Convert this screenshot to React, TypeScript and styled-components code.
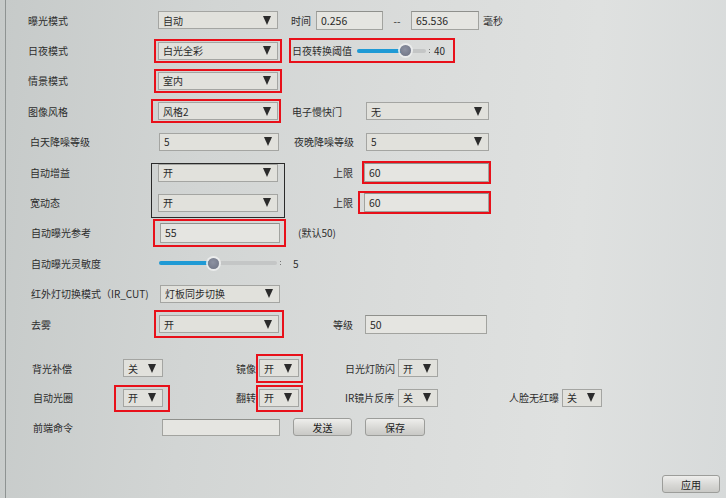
import styled, { createGlobalStyle } from 'styled-components';
import type { ReactNode } from 'react';

const GlobalStyle = createGlobalStyle`
  html, body { margin: 0; padding: 0; }
  body {
    width: 726px;
    height: 498px;
    overflow: hidden;
    font-family: "Noto Sans CJK SC", "Noto Sans", sans-serif;
    font-size: 10px;
    color: #2b2b2b;
  }
`;

const Screen = styled.div`
  width: 726px;
  height: 498px;
  box-sizing: border-box;
  padding-left: 5px;
  background: linear-gradient(95deg, #c6cac9 0%, #d2d5d4 28%, #dadcdb 55%, #dfe1e0 78%, #d7dada 100%);
`;

const Panel = styled.div`
  height: 100%;
  box-sizing: border-box;
  border-left: 1px solid #8e9392;
  padding: 5px 6px 5px 22px;
  display: flex;
  flex-direction: column;
`;

const MainGrid = styled.div`
  display: grid;
  grid-template-columns: 130px 122px 84px 126px 1fr;
  grid-auto-rows: 30.4px;
  align-items: center;
`;

const BottomGrid = styled.div`
  margin-top: 14px;
  display: grid;
  grid-template-columns: 95px 77px 59px 86px 53px 111px 53px 1fr;
  grid-auto-rows: 29.5px;
  align-items: center;
`;

const Cell = styled.div<{ $col: number; $span?: number; $pl?: number; $pr?: number; $right?: boolean }>`
  grid-column: ${(p) => p.$col} / span ${(p) => p.$span ?? 1};
  display: flex;
  align-items: center;
  justify-content: ${(p) => (p.$right ? 'flex-end' : 'flex-start')};
  padding-left: ${(p) => p.$pl ?? 0}px;
  padding-right: ${(p) => p.$pr ?? 0}px;
  white-space: nowrap;
`;

const Label = styled.span`
  white-space: nowrap;
  color: #2d2d2d;
`;

const SelectBox = styled.div<{ $w: number; $ml?: number }>`
  width: ${(p) => p.$w}px;
  height: 18px;
  margin-left: ${(p) => p.$ml ?? 0}px;
  box-sizing: border-box;
  border: 1px solid #a4a5a2;
  background: #e1e1dc;
  display: flex;
  align-items: center;
  justify-content: space-between;
  padding: 0 6px 0 4px;
  color: #2a2a2a;
`;

const Arrow = styled.span`
  width: 0;
  height: 0;
  border-left: 4px solid transparent;
  border-right: 4px solid transparent;
  border-top: 9px solid #2b2b2b;
`;

const TextBox = styled.div<{ $w: number; $h?: number }>`
  width: ${(p) => p.$w}px;
  height: ${(p) => p.$h ?? 19}px;
  box-sizing: border-box;
  border: 1px solid #a2a39f;
  border-top-color: #8f908c;
  background: #e5e5e1;
  display: flex;
  align-items: center;
  padding-left: 4px;
  font-size: 10.5px;
  color: #2a2a2a;
`;

const Mark = styled.div<{ $t: number; $r: number; $b: number; $l: number; $dark?: boolean }>`
  display: flex;
  align-items: center;
  border: ${(p) => (p.$dark ? '1px solid #2a2a2a' : '2px solid #e8101a')};
  padding: ${(p) => `${p.$t}px ${p.$r}px ${p.$b}px ${p.$l}px`};
  margin: ${(p) => {
    const w = p.$dark ? 1 : 2;
    return `-${p.$t + w}px -${p.$r + w}px -${p.$b + w}px -${p.$l + w}px`;
  }};
  gap: 5px;
`;

const Frame = styled.div`
  grid-column: 2;
  grid-row: span 2;
  align-self: start;
  margin: 6px 0 0 -7px;
  width: 134px;
  box-sizing: border-box;
  border: 1px solid #2a2a2a;
  padding: 0 6px 5px 6px;
  display: flex;
  flex-direction: column;
  gap: 12px;
`;

const Track = styled.div<{ $w: number }>`
  position: relative;
  width: ${(p) => p.$w}px;
  height: 4px;
  border-radius: 2px;
  background: #c4c6c6;
  &::after {
    content: '';
    position: absolute;
    right: -4px;
    top: 0;
    width: 1px;
    height: 1px;
    background: #777;
    box-shadow: 0 3px 0 #777;
  }
`;

const Fill = styled.div`
  position: absolute;
  left: 0;
  top: 0;
  bottom: 0;
  border-radius: 2px;
  background: #1f9ad5;
`;

const Thumb = styled.div`
  position: absolute;
  top: 50%;
  width: 11px;
  height: 11px;
  margin: -5.5px 0 0 -5.5px;
  border-radius: 50%;
  background: radial-gradient(circle at 45% 40%, #8d92a2, #6c7182);
  box-shadow: 0 0 0 2px rgba(238, 240, 240, 0.85);
`;

const Button = styled.div<{ $w: number }>`
  width: ${(p) => p.$w}px;
  height: 18px;
  box-sizing: border-box;
  border: 1px solid #9c9d9a;
  border-radius: 3px;
  background: linear-gradient(#eeeeec, #d6d6d3 60%, #c9c9c6);
  display: flex;
  align-items: center;
  justify-content: center;
  color: #222;
`;

const CommandRow = styled.div`
  height: 30px;
  display: flex;
  align-items: center;
`;

const CommandLabel = styled.span`
  width: 134px;
  padding-left: 5px;
  box-sizing: border-box;
`;

const Buttons = styled.div`
  display: flex;
  gap: 13px;
  margin-left: 13px;
`;

const Footer = styled.div`
  margin-top: auto;
  display: flex;
  justify-content: flex-end;
`;

const Dash = styled.span`
  width: 28px;
  text-align: center;
`;

function Select({ value, w = 120, ml }: { value: string; w?: number; ml?: number }) {
  return (
    <SelectBox $w={w} $ml={ml}>
      <span>{value}</span>
      <Arrow />
    </SelectBox>
  );
}

function Small({ value }: { value: string }) {
  return <Select value={value} w={40} />;
}

function Slider({ w, pct }: { w: number; pct: number }) {
  return (
    <Track $w={w}>
      <Fill style={{ width: `${pct * 100 - 3}%` }} />
      <Thumb style={{ left: `${pct * 100}%` }} />
    </Track>
  );
}

function Red({ children, t = 1, r = 2, b = 1, l = 2 }: { children: ReactNode; t?: number; r?: number; b?: number; l?: number }) {
  return (
    <Mark $t={t} $r={r} $b={b} $l={l}>
      {children}
    </Mark>
  );
}

export default function App() {
  return (
    <Screen>
      <GlobalStyle />
      <Panel>
        <MainGrid>
          <Cell $col={1}><Label>曝光模式</Label></Cell>
          <Cell $col={2}><Select value="自动" /></Cell>
          <Cell $col={3} $span={3} $pl={11}>
            <Label>时间</Label>
            <span style={{ width: 5 }} />
            <TextBox $w={67}>0.256</TextBox>
            <Dash>--</Dash>
            <TextBox $w={68}>65.536</TextBox>
            <span style={{ width: 4 }} />
            <Label>毫秒</Label>
          </Cell>

          <Cell $col={1}><Label>日夜模式</Label></Cell>
          <Cell $col={2}><Red><Select value="白光全彩" /></Red></Cell>
          <Cell $col={3} $span={3} $pl={12}>
            <Red t={3} r={8} b={3} l={1}>
              <Label>日夜转换阈值</Label>
              <Slider w={69} pct={0.71} />
              <span style={{ marginLeft: 3 }}>40</span>
            </Red>
          </Cell>

          <Cell $col={1}><Label>情景模式</Label></Cell>
          <Cell $col={2}><Red><Select value="室内" /></Red></Cell>

          <Cell $col={1}><Label>图像风格</Label></Cell>
          <Cell $col={2}><Red l={5} r={1}><Select value="风格2" /></Red></Cell>
          <Cell $col={3} $pl={12}><Label>电子慢快门</Label></Cell>
          <Cell $col={4}><Select value="无" w={123} ml={2} /></Cell>

          <Cell $col={1} $pl={2}><Label>白天降噪等级</Label></Cell>
          <Cell $col={2} $pl={1}><Select value="5" /></Cell>
          <Cell $col={3} $pl={14}><Label>夜晚降噪等级</Label></Cell>
          <Cell $col={4}><Select value="5" w={123} ml={2} /></Cell>

          <Cell $col={1} $pl={2}><Label>自动增益</Label></Cell>
          <Frame>
            <Select value="开" />
            <Select value="开" />
          </Frame>
          <Cell $col={3} $right $pr={11}><Label>上限</Label></Cell>
          <Cell $col={4}><Red t={0} r={0} b={0} l={0}><TextBox $w={125}>60</TextBox></Red></Cell>

          <Cell $col={1} $pl={2}><Label>宽动态</Label></Cell>
          <Cell $col={3} $right $pr={11}><Label>上限</Label></Cell>
          <Cell $col={4}><Red t={0} r={0} b={0} l={4}><TextBox $w={125}>60</TextBox></Red></Cell>

          <Cell $col={1} $pl={3}><Label>自动曝光参考</Label></Cell>
          <Cell $col={2} $pl={2}><Red t={2} r={4} b={2} l={5}><TextBox $w={120} $h={20}>55</TextBox></Red></Cell>
          <Cell $col={3} $pl={18}><Label>(默认50)</Label></Cell>

          <Cell $col={1} $pl={3}><Label>自动曝光灵敏度</Label></Cell>
          <Cell $col={2} $pl={1}><Slider w={118} pct={0.46} /></Cell>
          <Cell $col={3} $pl={13}><Label>5</Label></Cell>

          <Cell $col={1} $pl={3}><Label>红外灯切换模式（IR_CUT)</Label></Cell>
          <Cell $col={2} $pl={2}><Select value="灯板同步切换" /></Cell>

          <Cell $col={1} $pl={3}><Label>去雾</Label></Cell>
          <Cell $col={2} $pl={1}><Red t={3} r={3} b={3} l={3}><Select value="开" /></Red></Cell>
          <Cell $col={3} $right $pr={11}><Label>等级</Label></Cell>
          <Cell $col={4} $pl={1}><TextBox $w={122}>50</TextBox></Cell>
        </MainGrid>

        <BottomGrid>
          <Cell $col={1} $pl={4}><Label>背光补偿</Label></Cell>
          <Cell $col={2}><Small value="关" /></Cell>
          <Cell $col={3} $right $pr={3}><Label>镜像</Label></Cell>
          <Cell $col={4}><Red t={3} r={2} b={4} l={1}><Small value="开" /></Red></Cell>
          <Cell $col={5}><Label>日光灯防闪</Label></Cell>
          <Cell $col={6}><Small value="开" /></Cell>

          <Cell $col={1} $pl={5}><Label>自动光圈</Label></Cell>
          <Cell $col={2}><Red t={2} r={5} b={3} l={7}><Small value="开" /></Red></Cell>
          <Cell $col={3} $right $pr={3}><Label>翻转</Label></Cell>
          <Cell $col={4}><Red t={2} r={2} b={3} l={1}><Small value="开" /></Red></Cell>
          <Cell $col={5}><Label>IR镜片反序</Label></Cell>
          <Cell $col={6}><Small value="关" /></Cell>
          <Cell $col={7}><Label>人脸无红曝</Label></Cell>
          <Cell $col={8}><Small value="关" /></Cell>
        </BottomGrid>

        <CommandRow>
          <CommandLabel>前端命令</CommandLabel>
          <TextBox $w={118} $h={17} />
          <Buttons>
            <Button $w={59}>发送</Button>
            <Button $w={60}>保存</Button>
          </Buttons>
        </CommandRow>

        <Footer>
          <Button $w={58}>应用</Button>
        </Footer>
      </Panel>
    </Screen>
  );
}
